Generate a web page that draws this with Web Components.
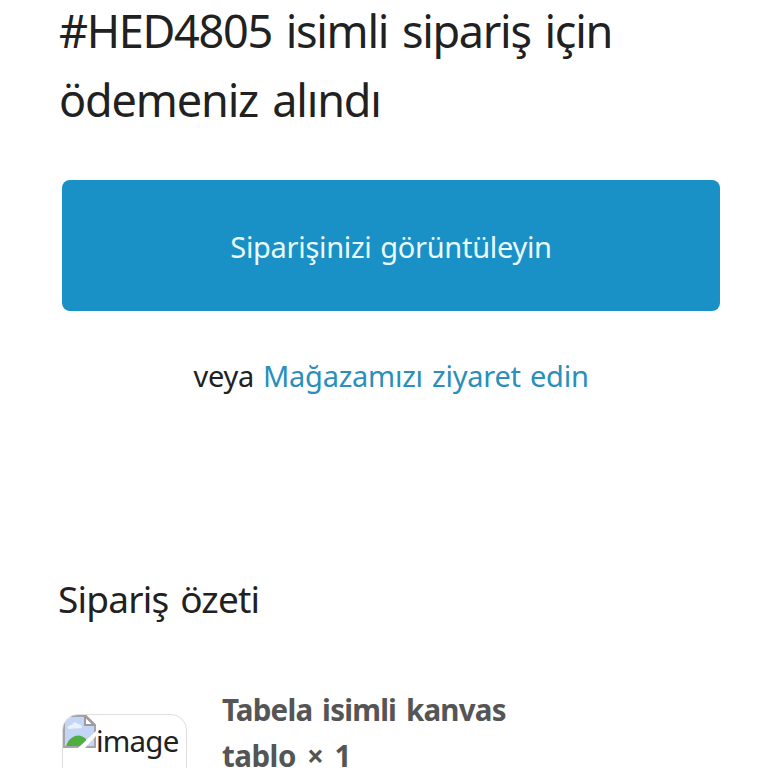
<!DOCTYPE html>
<html lang="tr">
<head>
<meta charset="UTF-8">
<meta name="viewport" content="width=device-width, initial-scale=1.0">
<title>Sipariş</title>
<style>
    body {
        margin: 0;
        height: 768px;
        overflow: hidden;
        background: #fff;
        color: #212121;
        font-family: "Noto Sans", "Open Sans", sans-serif;
    }
</style>
</head>
<body>
<order-mail>
    <mail-title>
        <span>#HED4805 isimli sipariş için</span>
        <span slot="second">ödemeniz alındı</span>
    </mail-title>
    <action-button>Siparişinizi görüntüleyin</action-button>
    <store-link label="Mağazamızı ziyaret edin">veya</store-link>
    <order-summary heading="Sipariş özeti">
        <order-item alt="image">
            <span>Tabela isimli kanvas</span>
            <span slot="second">tablo × 1</span>
        </order-item>
    </order-summary>
</order-mail>

<script>
class OrderMail extends HTMLElement {
    constructor() {
        super();
        this.attachShadow({ mode: 'open' });
        this.shadowRoot.innerHTML = `
            <style>
                :host {
                    display: flex;
                    flex-direction: column;
                    height: 768px;
                    overflow: hidden;
                    padding: 0 48px 0 62px;
                    box-sizing: border-box;
                }
            </style>
            <slot></slot>
        `;
    }
}

class MailTitle extends HTMLElement {
    constructor() {
        super();
        this.attachShadow({ mode: 'open' });
        this.shadowRoot.innerHTML = `
            <style>
                :host {
                    display: flow-root;
                    flex: none;
                    height: 180px;
                    margin-left: -3px;
                }
                h1 {
                    margin: -4px 0 0;
                    font-size: 45px;
                    font-weight: 400;
                    line-height: 69px;
                    letter-spacing: -1.3px;
                    word-spacing: 3.5px;
                    white-space: nowrap;
                }
                .line {
                    display: block;
                }
                .second {
                    letter-spacing: -1.15px;
                }
            </style>
            <h1>
                <span class="line"><slot></slot></span>
                <span class="line second"><slot name="second"></slot></span>
            </h1>
        `;
    }
}

class ActionButton extends HTMLElement {
    constructor() {
        super();
        this.attachShadow({ mode: 'open' });
        this.shadowRoot.innerHTML = `
            <style>
                :host {
                    display: block;
                    flex: none;
                }
                button {
                    display: flex;
                    align-items: center;
                    justify-content: center;
                    width: 100%;
                    height: 131px;
                    padding: 2px 0 0;
                    border: 0;
                    border-radius: 8px;
                    background: #1990c6;
                    color: #e9fbff;
                    font: 400 29px/40px "Noto Sans", "Open Sans", sans-serif;
                    letter-spacing: -0.3px;
                    word-spacing: 1.5px;
                    white-space: nowrap;
                }
            </style>
            <button type="button"><span><slot></slot></span></button>
        `;
    }
}

class StoreLink extends HTMLElement {
    constructor() {
        super();
        this.attachShadow({ mode: 'open' });
        this.shadowRoot.innerHTML = `
            <style>
                :host {
                    display: flex;
                    flex: none;
                    justify-content: center;
                    gap: 9px;
                    margin-top: 45px;
                    font-size: 29px;
                    line-height: 40px;
                    letter-spacing: -0.25px;
                    word-spacing: 2px;
                    white-space: nowrap;
                }
                a {
                    color: #2a8fba;
                    text-decoration: none;
                }
            </style>
            <span><slot></slot></span>
            <a href="#">${this.getAttribute('label')}</a>
        `;
    }
}

class OrderSummary extends HTMLElement {
    constructor() {
        super();
        this.attachShadow({ mode: 'open' });
        this.shadowRoot.innerHTML = `
            <style>
                :host {
                    display: block;
                    flex: none;
                    margin-top: 177px;
                }
                h2 {
                    margin: 0 0 62px -4px;
                    font-size: 37px;
                    font-weight: 400;
                    line-height: 52px;
                    letter-spacing: -0.8px;
                    word-spacing: 3px;
                    white-space: nowrap;
                }
            </style>
            <h2>${this.getAttribute('heading')}</h2>
            <slot></slot>
        `;
    }
}

class OrderItem extends HTMLElement {
    constructor() {
        super();
        this.attachShadow({ mode: 'open' });
        this.shadowRoot.innerHTML = `
            <style>
                :host {
                    display: flex;
                    align-items: flex-start;
                    gap: 35px;
                }
                .thumb {
                    display: flex;
                    box-sizing: border-box;
                    width: 125px;
                    height: 125px;
                    margin-top: 27px;
                    border: 1px solid #dedede;
                    border-radius: 16px;
                    overflow: hidden;
                    font-size: 29.5px;
                    line-height: 42px;
                    letter-spacing: -0.8px;
                }
                .thumb svg {
                    flex: none;
                    display: block;
                    width: 33px;
                    height: 33px;
                }
                .thumb span {
                    margin-top: 5px;
                }
                .name {
                    color: #555;
                    font-size: 29.5px;
                    font-weight: 700;
                    line-height: 46px;
                    letter-spacing: -0.8px;
                    white-space: nowrap;
                }
                .first, .second {
                    display: block;
                    word-spacing: 3px;
                }
                .second {
                    letter-spacing: -0.5px;
                    word-spacing: 4px;
                }
            </style>
            <div class="thumb">
                <svg viewBox="0 0 33 33">
                    <path d="M1 1H23L32 10V32H1Z" fill="#c3d6f5"/>
                    <path d="M5 14Q4 10 9 10Q11 5 15 9Q19 9 19 13Z" fill="#e9f2ff"/>
                    <path d="M3 31Q6 23 12 21Q18 19 23 24L23 31Z" fill="#4fae40"/>
                    <path d="M1 1H23L32 10V32H1Z" fill="none" stroke="#a6a6aa" stroke-width="2"/>
                    <path d="M22 1V10H31Z" fill="#fff" stroke="#a09a9c" stroke-width="2"/>
                    <path d="M15 33L33 16V21L22 33Z" fill="#fff"/>
                </svg>
                <span>${this.getAttribute('alt')}</span>
            </div>
            <div class="name">
                <span class="first"><slot></slot></span>
                <span class="second"><slot name="second"></slot></span>
            </div>
        `;
    }
}

customElements.define('order-mail', OrderMail);
customElements.define('mail-title', MailTitle);
customElements.define('action-button', ActionButton);
customElements.define('store-link', StoreLink);
customElements.define('order-summary', OrderSummary);
customElements.define('order-item', OrderItem);
</script>
</body>
</html>
